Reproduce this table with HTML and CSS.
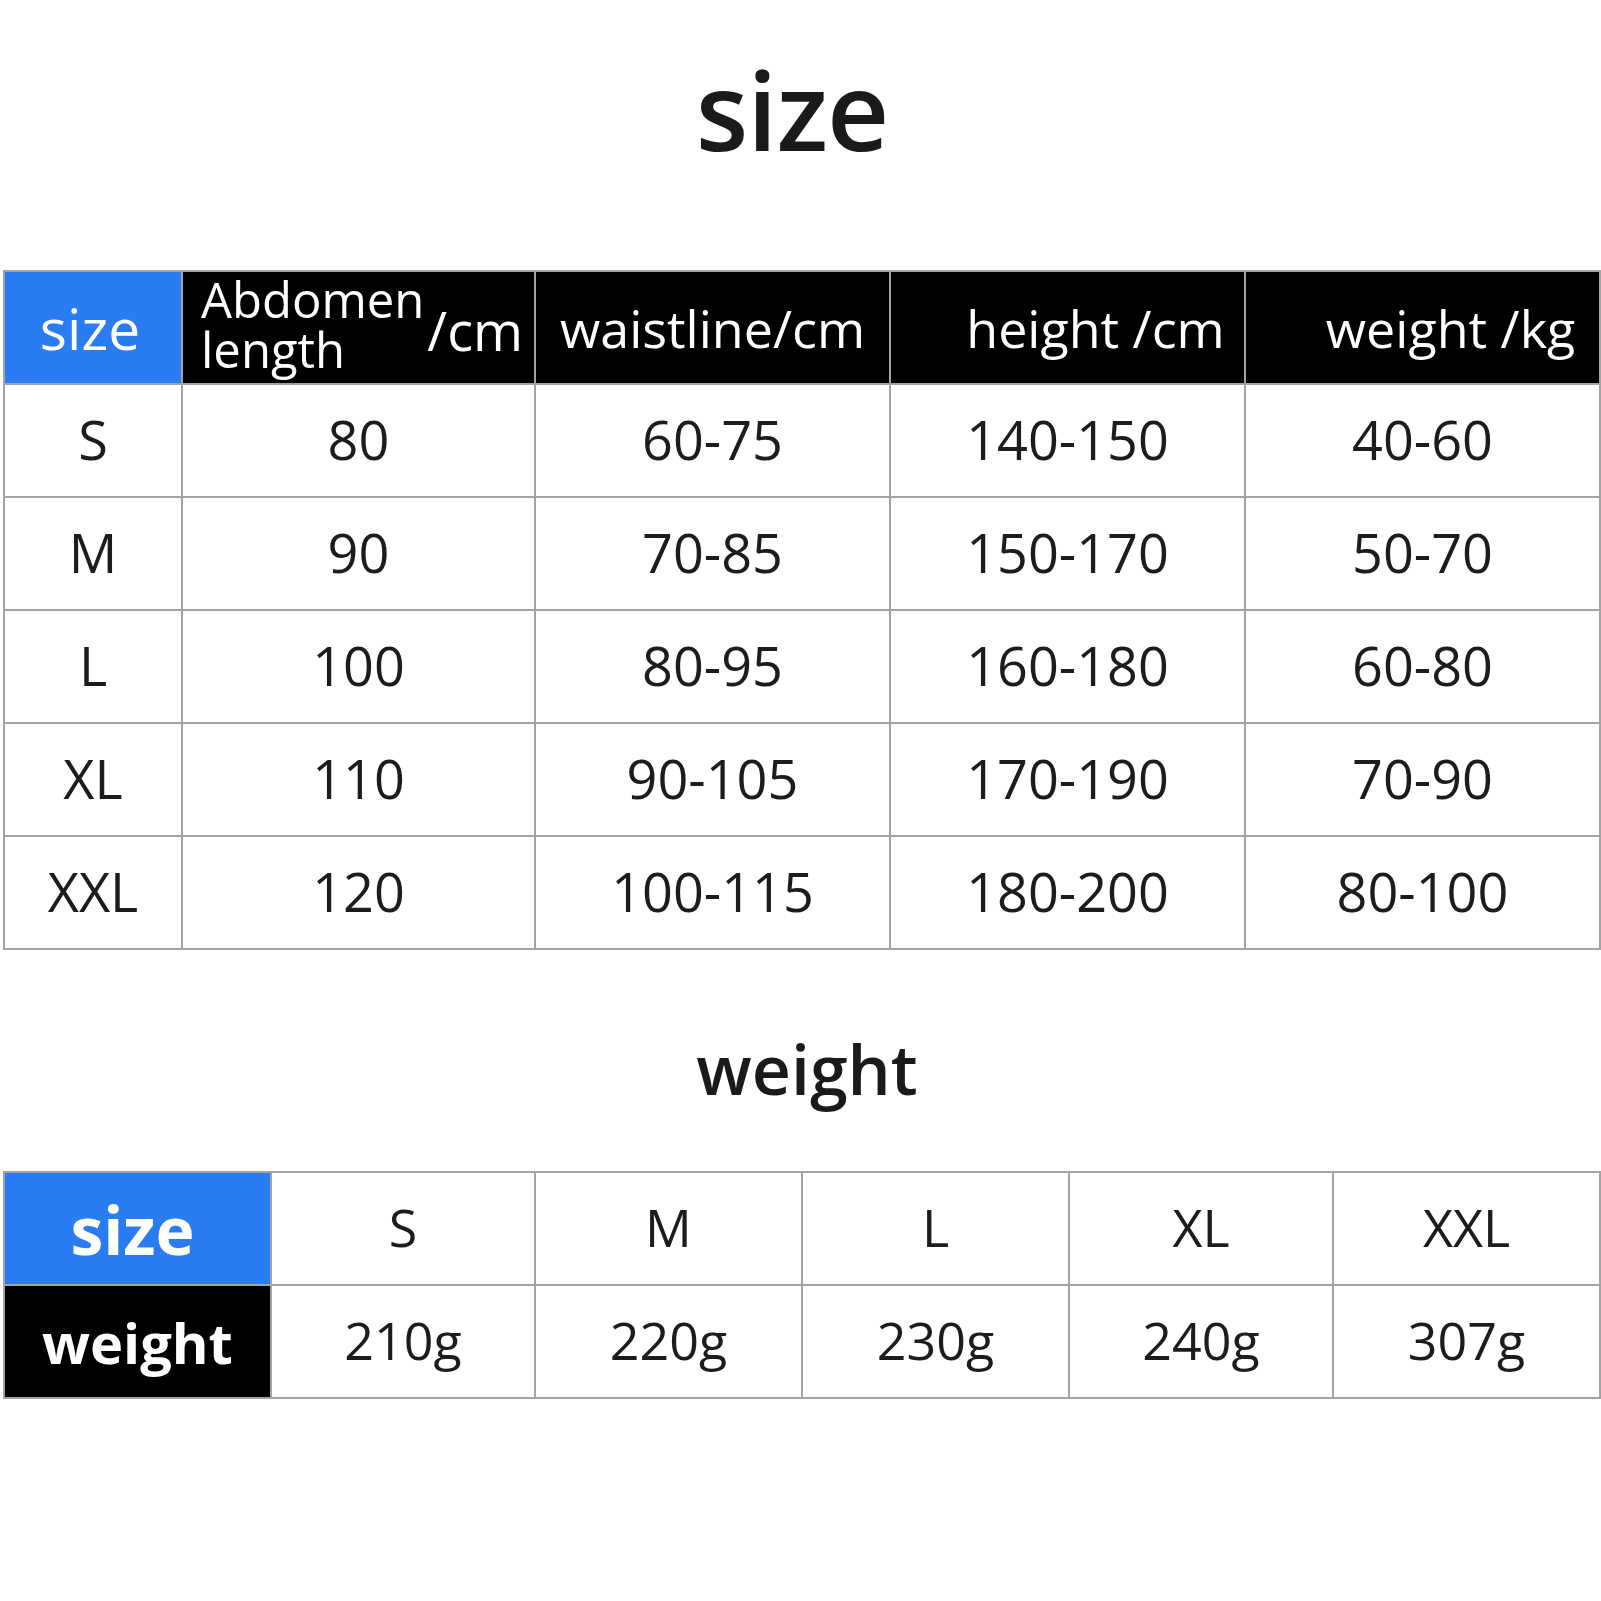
FILE: index.html
```html
<!DOCTYPE html>
<html>
<head>
<meta charset="utf-8">
<link rel="stylesheet" href="styles.css">
</head>
<body>
<div class="page">
  <h1 class="title">size</h1>
  <table class="chart">
    <colgroup>
      <col class="c1"><col class="c2"><col class="c3"><col class="c3"><col class="c3">
    </colgroup>
    <tr class="head">
      <th class="blue hsize">size</th>
      <th class="abd"><div class="abd-wrap"><div class="abd-lines"><span>Abdomen</span><span>length</span></div><span class="unit">/cm</span></div></th>
      <th>waistline/cm</th>
      <th class="shift">height /cm</th>
      <th class="shift">weight /kg</th>
    </tr>
    <tr><td>S</td><td>80</td><td>60-75</td><td>140-150</td><td>40-60</td></tr>
    <tr><td>M</td><td>90</td><td>70-85</td><td>150-170</td><td>50-70</td></tr>
    <tr><td>L</td><td>100</td><td>80-95</td><td>160-180</td><td>60-80</td></tr>
    <tr><td>XL</td><td>110</td><td>90-105</td><td>170-190</td><td>70-90</td></tr>
    <tr><td>XXL</td><td>120</td><td>100-115</td><td>180-200</td><td>80-100</td></tr>
  </table>
  <h2 class="subtitle">weight</h2>
  <table class="chart weights">
    <colgroup>
      <col class="w1"><col class="w2"><col class="w1"><col class="w1"><col class="w2"><col class="w1">
    </colgroup>
    <tr>
      <th class="blue bold big">size</th>
      <td>S</td><td>M</td><td>L</td><td>XL</td><td>XXL</td>
    </tr>
    <tr>
      <th class="black bold">weight</th>
      <td>210g</td><td>220g</td><td>230g</td><td>240g</td><td>307g</td>
    </tr>
  </table>
</div>
</body>
</html>
```
FILE: styles.css
```css
html, body {
  margin: 0;
  padding: 0;
  background: #ffffff;
}
.page {
  width: 1596px;
  padding: 0 2px 0 3px;
  font-family: "Open Sans", "Noto Sans", sans-serif;
  color: #1c1c1c;
}
.title {
  margin: 0;
  padding-top: 56px;
  height: 108px;
  margin-bottom: 106px;
  font-size: 108px;
  line-height: 108px;
  font-weight: 600;
  text-align: center;
  letter-spacing: -1px;
  color: #1a1a1a;
  padding-right: 18px;
}
.subtitle {
  margin: 85px 0 68px 0;
  height: 68px;
  font-size: 68px;
  line-height: 68px;
  font-weight: 600;
  text-align: center;
  color: #1a1a1a;
  padding-left: 12px;
}
.chart {
  width: 1596px;
  border-collapse: collapse;
  table-layout: fixed;
}
.c1 { width: 178px; }
.c2 { width: 353px; }
.c3 { width: 355px; }
.w1 { width: 267px; }
.w2 { width: 264px; }
.chart th, .chart td {
  border: 2px solid #a3a3a3;
  padding: 0;
  text-align: center;
  vertical-align: middle;
}
.chart tr { height: 113px; }
.chart td {
  font-size: 54px;
  font-weight: 400;
  color: #1c1c1c;
  padding-bottom: 4px;
}
.head th {
  background: #000000;
  color: #ffffff;
  font-size: 52px;
  font-weight: 400;
  white-space: nowrap;
}
.head th.blue, .chart th.blue {
  background: #2a7cf2;
  color: #ffffff;
}
.head th.hsize {
  font-size: 57px;
  padding-right: 6px;
}
.head th.shift {
  padding-left: 56px;
}
.abd-wrap {
  display: flex;
  align-items: center;
  padding-left: 18px;
}
.abd-lines {
  display: flex;
  flex-direction: column;
  text-align: left;
  font-size: 49px;
  line-height: 50px;
  margin-top: -8px;
}
.unit {
  margin-left: 3px;
  font-size: 54px;
  padding-top: 4px;
}
.chart th.black {
  background: #000000;
  color: #ffffff;
}
.chart th.bold {
  font-weight: 700;
  font-size: 56px;
}
.chart th.big {
  font-size: 66px;
  padding-right: 10px;
}
.weights td {
  font-size: 52px;
}
```
